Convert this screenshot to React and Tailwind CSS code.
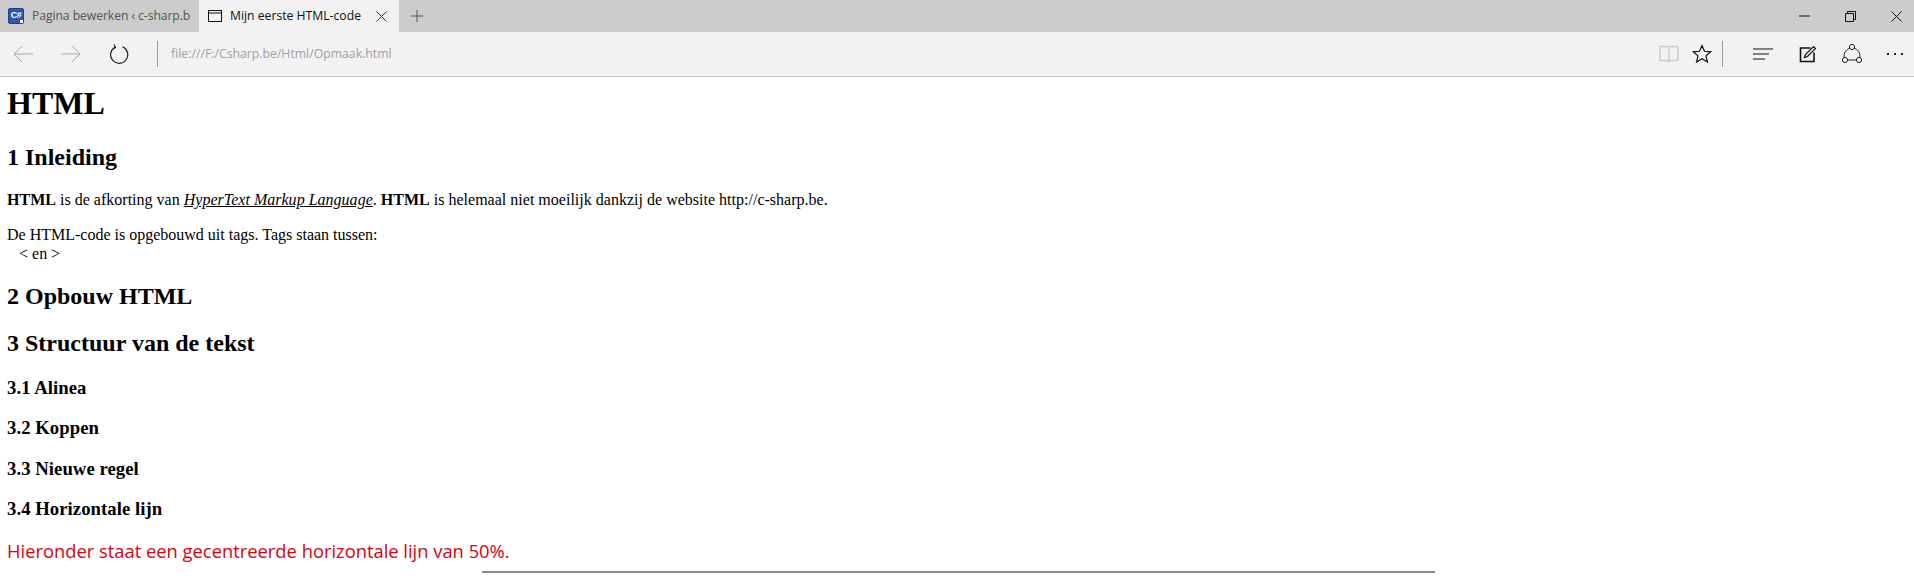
import React from "react";

const Stroke = ({ w = 24, h = 24, className = "", children }) => (
  <svg width={w} height={h} viewBox={`0 0 ${w} ${h}`} fill="none" stroke="currentColor" strokeWidth="1" className={className}>
    {children}
  </svg>
);

const TabBar = () => (
  <div className="flex h-8 bg-[#cccccc] font-['Open_Sans',sans-serif] text-[12.2px]">
    <div className="flex w-[199px] items-center overflow-hidden pl-2 text-[#555555]">
      <div className="relative mr-2 flex h-4 w-4 shrink-0 items-center justify-center rounded-[2px] border border-[#1f3f86] bg-[#2c56b0] font-['Liberation_Sans',sans-serif] text-[9px] font-bold tracking-tighter text-white">
        C#
        <div className="absolute right-0 bottom-0 h-[3px] w-[3px] bg-white" />
      </div>
      <span className="whitespace-nowrap tracking-[-0.08px]">Pagina bewerken ‹ c-sharp.b</span>
    </div>
    <div className="flex w-[200px] items-center bg-[#f2f2f2] pl-[9px] text-[#111111]">
      <Stroke w={14} h={12} className="mr-2 shrink-0">
        <rect x="0.5" y="0.5" width="13" height="11" />
        <path d="M0.5 3h13" />
      </Stroke>
      <span className="whitespace-nowrap">Mijn eerste HTML-code</span>
      <Stroke w={11} h={11} className="ml-auto mr-3 shrink-0 text-[#333333]">
        <path d="M0.5 0.5l10 10M10.5 0.5l-10 10" />
      </Stroke>
    </div>
    <div className="flex items-center pl-3 text-[#555555]">
      <Stroke w={12} h={12}>
        <path d="M6 0v12M0 6h12" />
      </Stroke>
    </div>
    <div className="ml-auto flex items-center text-[#111111]">
      <Stroke w={11} h={2} className="mr-[35px]">
        <path d="M0 1h11" />
      </Stroke>
      <Stroke w={11} h={11} className="mr-[35px]">
        <path d="M0.5 2.5h8v8h-8zM2.5 2.5v-2h8v8h-2" />
      </Stroke>
      <Stroke w={11} h={11} className="mr-3">
        <path d="M0.5 0.5l10 10M10.5 0.5l-10 10" />
      </Stroke>
    </div>
  </div>
);

const ToolBar = () => (
  <div className="flex h-[45px] items-center border-b border-[#c8c8c8] bg-[#f2f2f2] pb-px">
    <Stroke w={20} h={18} className="ml-[13px] text-[#a6a6a6]">
      <path d="M20 9H1M9 1L1 9l8 8" />
    </Stroke>
    <Stroke w={20} h={18} className="ml-7 text-[#a6a6a6]">
      <path d="M0 9h19M11 1l8 8-8 8" />
    </Stroke>
    <Stroke w={20} h={20} className="ml-7 text-[#222222]">
      <path d="M6 3.2A8.6 8.6 0 1 0 13.5 2.8M5 0.5L6.5 3.5L3.5 5.5" strokeWidth="1.2" />
    </Stroke>
    <div className="ml-[28px] h-[26px] w-px bg-[#9a9a9a]" />
    <span className="mt-px ml-[13px] font-['Open_Sans',sans-serif] text-[12.25px] text-[#a0a0a0]">file:///F:/Csharp.be/Html/Opmaak.html</span>
    <div className="ml-auto flex items-center">
      <Stroke w={20} h={17} className="text-[#c9c9c9]">
        <path d="M1 1.5h7.5l1.5 1 1.5-1H19v14h-7.5l-1.5 1-1.5-1H1zM10 2.5v13" strokeWidth="1.4" />
      </Stroke>
      <Stroke w={20} h={20} className="ml-[13px] text-[#111111]">
        <path d="M10 1.5l2.5 5.8 6.2.5-4.7 4.1 1.4 6.1L10 14.8l-5.4 3.2 1.4-6.1-4.7-4.1 6.2-.5z" strokeWidth="1.2" />
      </Stroke>
      <div className="ml-[10px] h-[26px] w-px bg-[#9a9a9a]" />
      <Stroke w={20} h={14} className="ml-[30px] text-[#111111]">
        <path d="M0 2h20M0 7h16M0 12h12" strokeWidth="1.2" />
      </Stroke>
      <Stroke w={18} h={18} className="ml-[26px] text-[#111111]">
        <path d="M15 7.5V16.5H1.5V3h10" strokeWidth="1.6" />
        <path d="M5.5 12.5L6.5 9.5L14.5 1.5L16.5 3.5L8.5 11.5z" strokeWidth="1.2" />
      </Stroke>
      <Stroke w={22} h={22} className="ml-6 text-[#222222]">
        <circle cx="11" cy="4" r="2.6" />
        <circle cx="4" cy="17" r="2.6" />
        <circle cx="18" cy="17" r="2.6" />
        <path d="M7 17h8M13.3 5.2a8 8 0 0 1 5.5 9.2M8.7 5.2a8 8 0 0 0-5.5 9.2" />
      </Stroke>
      <div className="ml-6 mr-[11px] flex gap-[5px]">
        <div className="h-[2px] w-[2px] bg-[#222222]" />
        <div className="h-[2px] w-[2px] bg-[#222222]" />
        <div className="h-[2px] w-[2px] bg-[#222222]" />
      </div>
    </div>
  </div>
);

const App = () => (
  <div className="h-[585px] overflow-hidden bg-white">
    <TabBar />
    <ToolBar />
    <div className="pr-1 pl-[7px] font-['Liberation_Serif',serif] text-[16px] leading-[18px] text-black">
      <h1 className="mt-2 text-[32px] font-bold leading-[37px]">HTML</h1>
      <h2 className="mt-[22px] text-[24px] font-bold leading-[27px]">1 Inleiding</h2>
      <p className="mt-5 tracking-[0.012px]">
        <b>HTML</b> is de afkorting van <a className="italic underline">HyperText Markup Language</a>. <b>HTML</b> is helemaal niet moeilijk dankzij de website http://c-sharp.be.
      </p>
      <p className="mt-4 leading-[19px]">
        De HTML-code is opgebouwd uit tags. Tags staan tussen:
        <br />
        <span className="pl-3">&lt; en &gt;</span>
      </p>
      <h2 className="mt-5 text-[24px] font-bold leading-[27px]">2 Opbouw HTML</h2>
      <h2 className="mt-5 text-[24px] font-bold leading-[27px]">3 Structuur van de tekst</h2>
      <h3 className="mt-5 text-[18.72px] font-bold leading-[21px] tracking-[0.05px]">3.1 Alinea</h3>
      <h3 className="mt-[19px] text-[18.72px] font-bold leading-[21px] tracking-[0.05px]">3.2 Koppen</h3>
      <h3 className="mt-5 text-[18.72px] font-bold leading-[21px] tracking-[0.05px]">3.3 Nieuwe regel</h3>
      <h3 className="mt-[19px] text-[18.72px] font-bold leading-[21px] tracking-[0.05px]">3.4 Horizontale lijn</h3>
      <p className="mt-5 font-['Open_Sans',sans-serif] text-[18.35px] leading-[24px] text-[#d9000f]">Hieronder staat een gecentreerde horizontale lijn van 50%.</p>
      <hr className="mx-auto mt-2 w-[953px] border-t-2 border-[#8c8c8c]" />
    </div>
  </div>
);

export default App;
